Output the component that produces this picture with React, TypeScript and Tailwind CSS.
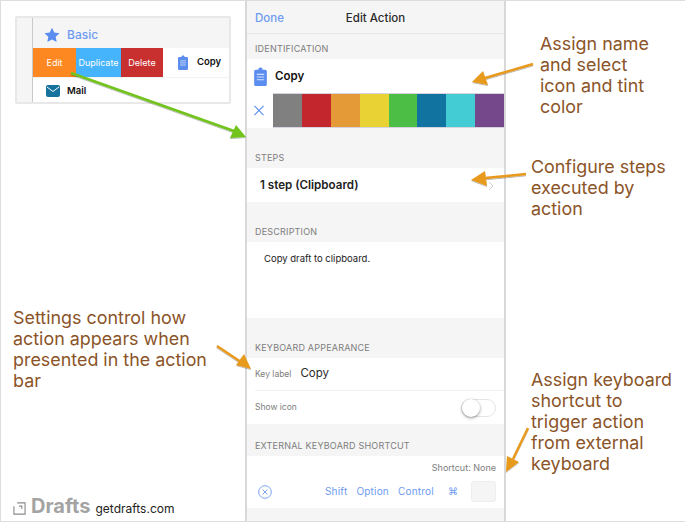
import React from "react";

const swatches = ["#808080", "#c4262e", "#e59a38", "#e8d234", "#4cbd45", "#11739f", "#44ccd4", "#74488a"];

function ClipboardIcon({ className }: { className: string }) {
  return (
    <svg viewBox="0 0 12 18" className={className}>
      <path d="M1.500 2.500H4C4 1.200 4.800.5 6 .5s2 .7 2 2h2.500A1.500 1.500 0 0 1 12 4v12.500a1.500 1.500 0 0 1-1.500 1.500h-9A1.500 1.500 0 0 1 0 16.500V4a1.500 1.500 0 0 1 1.500-1.500z" fill="#5b8def" />
      <path d="M2.500 7h7M2.500 9.500h7M2.500 12h7" stroke="#cfe0fb" strokeWidth="1" />
    </svg>
  );
}

function SectionLabel({ children, className }: { children: React.ReactNode; className: string }) {
  return (
    <div className={`px-2 text-[9px] leading-[11px] tracking-[0.2px] text-[#7d7d7d] ${className}`}>{children}</div>
  );
}

function Arrows() {
  const orange = "#e89a1f";
  return (
    <svg className="absolute left-0 top-0 pointer-events-none" width="685" height="522">
      <defs>
        <filter id="sh" x="-20%" y="-20%" width="140%" height="140%">
          <feDropShadow dx="0" dy="1" stdDeviation="0.7" floodColor="#000" floodOpacity="0.3" />
        </filter>
      </defs>
      <g filter="url(#sh)">
        <path d="M70 72L233 130" stroke="#72c41e" strokeWidth="2.500" />
        <path d="M245 136L229 137L235 124z" fill="#72c41e" />
        <path d="M532 63L484 77" stroke={orange} strokeWidth="2.500" />
        <path d="M471 81L482 70L487 84z" fill={orange} />
        <path d="M525 173L484 177" stroke={orange} strokeWidth="2.500" />
        <path d="M470 179L484 170L486 185z" fill={orange} />
        <path d="M216 345L240 361" stroke={orange} strokeWidth="2.500" />
        <path d="M250 368L235 364L243 353z" fill={orange} />
        <path d="M527 427L512 458" stroke={orange} strokeWidth="2.500" />
        <path d="M505 471L506 455L518 461z" fill={orange} />
      </g>
    </svg>
  );
}

export default function App() {
  const note = "text-[17.900px] leading-[21px] text-[#8b5428]";
  return (
    <div className="relative flex h-[522px] w-[685px] overflow-hidden border-y border-l border-[#dddddd] bg-white font-['Inter',sans-serif]">
      {/* left column */}
      <div className="flex w-[244px] shrink-0 flex-col">
        <div className="ml-[14px] mt-[15px] flex h-[88px] w-[216px] rounded-[2px] border-2 border-[#e8e8e8]">
          <div className="w-[16px] shrink-0 border-r border-[#c9c9c9] bg-[#f5f5f5]" />
          <div className="min-w-0 flex-1">
            <div className="flex h-[30px] items-center gap-[7px] bg-[#f5f5f5] pl-[11px] pt-[3px]">
              <svg viewBox="0 0 24 24" className="h-[16px] w-[16px]">
                <path d="M12 1l3.400 7.300 7.900 1-5.800 5.400 1.500 7.900L12 18.700l-7 3.900 1.500-7.900L.7 9.300l7.900-1z" fill="#5b8def" />
              </svg>
              <span className="text-[12px] font-medium text-[#6d9bf1]">Basic</span>
            </div>
            <div className="flex h-[29px] items-center text-[9px] text-white">
              <div className="flex h-full w-[43px] items-center justify-center bg-[#fd8821]">Edit</div>
              <div className="flex h-full w-[45px] items-center justify-center bg-[#45b4fd]">Duplicate</div>
              <div className="flex h-full w-[42px] items-center justify-center bg-[#c83030]">Delete</div>
              <ClipboardIcon className="ml-[15px] h-[15px] w-[10px]" />
              <span className="ml-[9px] text-[9.500px] font-semibold text-[#111111]">Copy</span>
            </div>
            <div className="flex h-[27px] items-center gap-[7px] border-t border-[#f2f2f2] pl-[13px]">
              <svg viewBox="0 0 14 12" className="h-[12px] w-[14px]">
                <rect width="14" height="12" rx="2" fill="#16739e" />
                <path d="M1 2l6 4.500L13 2" stroke="#fff" strokeWidth="1" fill="none" />
              </svg>
              <span className="text-[9.500px] font-semibold text-[#111111]">Mail</span>
            </div>
          </div>
        </div>
        <p className={`ml-[12px] mt-[203px] w-[210px] ${note}`}>
          Settings control how action appears when presented in the action bar
        </p>
        <div className="ml-[12px] mt-auto mb-[3px] flex items-end">
          <svg viewBox="0 0 14 14" className="mb-[3px] h-[13px] w-[13px]" fill="none" stroke="#8a8a8a" strokeWidth="1.200">
            <path d="M1 4.500V13H13V1H4.500M6.500 4.500H9.500V7.500" />
          </svg>
          <span className="ml-[5px] text-[20px] font-bold leading-[24px] text-[#a3a3a3]">Drafts</span>
          <span className="ml-[5px] text-[12px] leading-[18px] text-[#222222]">getdrafts.com</span>
        </div>
      </div>

      {/* phone */}
      <div className="flex w-[261px] shrink-0 flex-col border-x-2 border-[#d8d8d8] bg-[#f5f5f5]">
        <div className="relative flex h-[33px] items-center justify-center border-b border-[#e6e6e6] pt-[3px]">
          <span className="absolute left-[8px] text-[11.500px] font-medium text-[#6d9bf1]">Done</span>
          <span className="text-[11.500px] font-medium text-[#2a2a2a]">Edit Action</span>
        </div>
        <SectionLabel className="mt-[9px]">IDENTIFICATION</SectionLabel>
        <div className="mt-[5px] bg-white">
          <div className="flex h-[34px] items-center pl-[7px] pt-px">
            <ClipboardIcon className="h-[19px] w-[13px]" />
            <span className="ml-[8px] text-[11.500px] font-semibold text-[#111111]">Copy</span>
          </div>
          <div className="flex h-[35px] items-center">
            <svg viewBox="0 0 12 12" className="ml-[6px] mr-[8px] h-[11px] w-[12px]" stroke="#5b8def" strokeWidth="1.200">
              <path d="M1 1l10 10M11 1L1 11" />
            </svg>
            <div className="flex h-full flex-1 border-y border-[#d7d3de]">
              {swatches.map((c) => (
                <div key={c} className="h-full flex-1" style={{ backgroundColor: c }} />
              ))}
            </div>
          </div>
        </div>
        <SectionLabel className="mt-[24px]">STEPS</SectionLabel>
        <div className="mt-[5px] flex h-[34px] items-center justify-between bg-white pl-[13px] pr-[10px] pt-[2px]">
          <span className="text-[11.600px] font-semibold text-[#222222]">1 step (Clipboard)</span>
          <svg viewBox="0 0 6 10" className="h-[10px] w-[6px]" fill="none" stroke="#cfcfcf" strokeWidth="1">
            <path d="M1 1l4 4-4 4" />
          </svg>
        </div>
        <SectionLabel className="mt-[24px]">DESCRIPTION</SectionLabel>
        <div className="mt-[5px] h-[76px] bg-white pl-[17px] pt-[11px] text-[9.500px] leading-[12px] text-[#222222]">
          Copy draft to clipboard.
        </div>
        <SectionLabel className="mt-[24px]">KEYBOARD APPEARANCE</SectionLabel>
        <div className="mt-[5px] bg-white">
          <div className="ml-[8px] flex h-[33px] items-center border-b border-[#f3f3f3]">
            <span className="text-[8.500px] text-[#7d7d7d]">Key label</span>
            <span className="ml-[9px] text-[11.500px] text-[#2a2a2a]">Copy</span>
          </div>
          <div className="flex h-[33px] items-center justify-between pl-[8px] pr-[8px]">
            <span className="text-[8.500px] text-[#7d7d7d]">Show icon</span>
            <div className="flex h-[18px] w-[35px] items-center rounded-full border border-[#e5e5e5] bg-white">
              <div className="h-[18px] w-[18px] rounded-full bg-white shadow-[0_1px_3px_rgba(0,0,0,0.45)]" />
            </div>
          </div>
        </div>
        <SectionLabel className="mt-[16px]">EXTERNAL KEYBOARD SHORTCUT</SectionLabel>
        <div className="mt-[5px] h-[52px] bg-white">
          <div className="pr-[8px] pt-[6px] text-right text-[9px] leading-[11px] text-[#7d7d7d]">Shortcut: None</div>
          <div className="mt-[8px] flex items-center pl-[11px] pr-[8px] text-[10px] tracking-[0.2px] text-[#6d9bf1]">
            <svg viewBox="0 0 14 14" className="h-[14px] w-[14px]" fill="none" stroke="#6d9bf1" strokeWidth="0.900">
              <circle cx="7" cy="7" r="6.300" />
              <path d="M4.500 4.500l5 5M9.500 4.500l-5 5" />
            </svg>
            <span className="ml-[53px]">Shift</span>
            <span className="ml-[9px]">Option</span>
            <span className="ml-[9px]">Control</span>
            <span className="ml-[14px] font-['DejaVu_Sans',sans-serif]">⌘</span>
            <div className="ml-auto h-[21px] w-[25px] rounded-[3px] border border-[#eeeeee] bg-[#f5f5f5]" />
          </div>
        </div>
      </div>

      {/* right column */}
      <div className="flex min-w-0 flex-1 flex-col pl-[25px]">
        <p className={`ml-[9px] mt-[32px] w-[125px] ${note}`}>Assign name and select icon and tint color</p>
        <p className={`mt-[39px] w-[150px] ${note}`}>Configure steps executed by action</p>
        <p className={`mt-[150px] w-[150px] ${note}`}>Assign keyboard shortcut to trigger action from external keyboard</p>
      </div>
      <Arrows />
    </div>
  );
}
